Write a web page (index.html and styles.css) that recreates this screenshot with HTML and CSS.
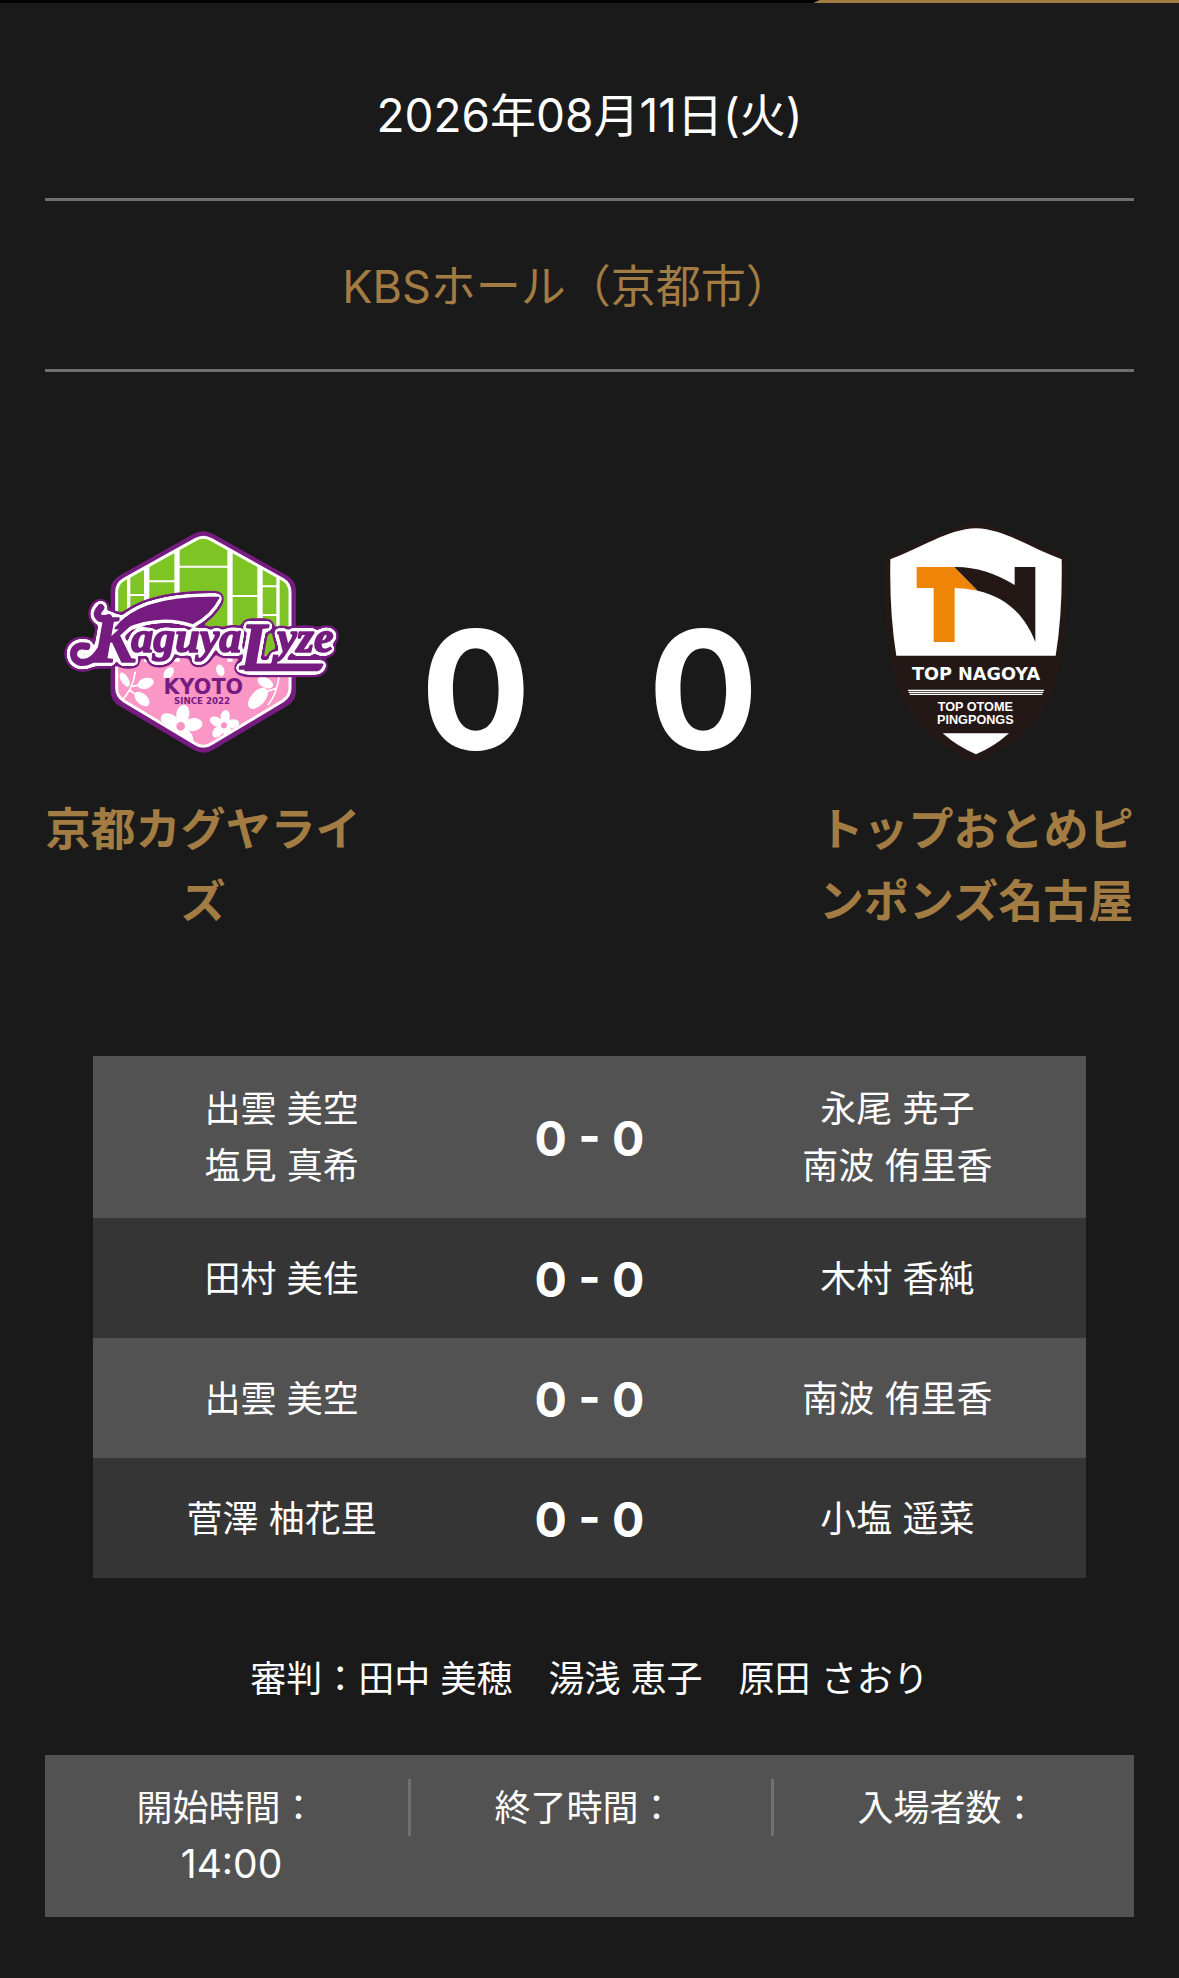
FILE: index.html
```html
<!DOCTYPE html>
<html lang="ja">
<head>
<meta charset="utf-8">
<meta name="viewport" content="width=device-width, initial-scale=1">
<title>京都カグヤライズ 対 トップおとめピンポンズ名古屋</title>
<link rel="stylesheet" href="styles.css">
</head>
<body>
<div class="tabs"><span class="tabs-active"></span></div>
<main class="match">
  <h1 class="date">2026年08月11日(火)</h1>
  <p class="venue"><a href="#venue">KBSホール（京都市）</a></p>

  <section class="versus">
    <a class="team" href="#kyoto">
      <svg class="team-logo" viewBox="-6 -15 930 780" role="img" aria-label="Kaguya Lyze">
        <defs>
          <clipPath id="hex"><path d="M436 74Q460 60 484 74L698 193Q720 206 720 232V520Q720 544 698 558L484 686Q460 702 436 686L222 558Q200 544 200 520V232Q200 206 222 193Z"/></clipPath>
          <filter id="rings" filterUnits="userSpaceOnUse" x="0" y="180" width="920" height="360" color-interpolation-filters="sRGB">
            <feGaussianBlur in="SourceAlpha" stdDeviation="11" result="soft"/>
            <feComponentTransfer in="soft" result="outer"><feFuncA type="linear" slope="40" intercept="-1.2"/></feComponentTransfer>
            <feFlood flood-color="#761c80"/><feComposite in2="outer" operator="in" result="edge"/>
            <feGaussianBlur in="SourceAlpha" stdDeviation="8" result="near"/>
            <feComponentTransfer in="near" result="inner"><feFuncA type="linear" slope="30" intercept="-2"/></feComponentTransfer>
            <feFlood flood-color="#fff"/><feComposite in2="inner" operator="in" result="halo"/>
            <feMerge><feMergeNode in="edge"/><feMergeNode in="halo"/><feMergeNode in="SourceGraphic"/></feMerge>
          </filter>
          <g id="flower"><ellipse cy="-34" rx="18" ry="27"/><ellipse cy="-34" rx="18" ry="27" transform="rotate(72)"/><ellipse cy="-34" rx="18" ry="27" transform="rotate(144)"/><ellipse cy="-34" rx="18" ry="27" transform="rotate(216)"/><ellipse cy="-34" rx="18" ry="27" transform="rotate(288)"/><circle r="12" fill="#f993c4"/></g>
        </defs>
        <path fill="#761c80" d="M430 57Q460 40 490 57L710 181Q738 197 738 226V530Q738 558 710 574L490 704Q460 722 430 704L210 574Q182 558 182 530V226Q182 197 210 181Z"/>
        <g clip-path="url(#hex)">
          <path fill="#7fc425" d="M190 50H730V440H190Z"/>
          <path fill="#fb97c6" d="M190 420H730V710H190Z"/>
          <path fill="none" stroke="#fff" stroke-width="16" d="M381 50V440M540 50V440M290 100V440M630 100V440"/>
          <path fill="none" stroke="#fff" stroke-width="10" d="M236 150V440M684 150V440"/>
          <path fill="none" stroke="#fff" stroke-width="6" d="M381 155H540M290 199H381M540 243H630M236 240H290M630 214H684M630 300H684"/>
          <g fill="#fff">
            <use href="#flower" transform="translate(392 634) rotate(10) scale(1.08)"/>
            <use href="#flower" transform="translate(522 631) rotate(8) scale(.76)"/>
            <ellipse cx="356" cy="474" rx="13" ry="20" transform="rotate(35 356 474)"/>
            <ellipse cx="511" cy="466" rx="12" ry="18" transform="rotate(-20 511 466)"/>
            <ellipse cx="287" cy="505" rx="25" ry="16" transform="rotate(-18 287 505)"/>
            <ellipse cx="276" cy="552" rx="27" ry="16" transform="rotate(42 276 552)"/>
            <ellipse cx="624" cy="550" rx="38" ry="21" transform="rotate(-48 624 550)"/>
            <ellipse cx="646" cy="503" rx="25" ry="15" transform="rotate(28 646 503)"/>
            <ellipse cx="224" cy="494" rx="24" ry="11" transform="rotate(60 224 494)"/>
            <path fill="none" stroke="#fff" stroke-width="5" d="M208 562Q248 530 256 470M246 514L280 508M238 526L270 545M654 570Q680 540 688 480M640 532L680 520"/>
          </g>
        </g>
        <path fill="none" stroke="#fff" stroke-width="9" d="M436 74Q460 60 484 74L698 193Q720 206 720 232V520Q720 544 698 558L484 686Q460 702 436 686L222 558Q200 544 200 520V232Q200 206 222 193Z"/>
        <g class="wordmark" filter="url(#rings)">
          <path d="M196 340C240 282 330 243 506 248Q480 298 428 325Q330 290 212 342Z"/>
          <path d="M600 448H818Q812 464 802 466H585Z"/>
          <path class="wordmark-tail" d="M110 394C66 384 60 428 86 440C124 452 152 410 166 376"/>
          <path class="wordmark-tail" d="M152 278C132 300 146 318 176 308"/>
          <text><tspan class="script-cap" x="124" y="440">K</tspan><tspan class="script" x="244" y="410">aguya</tspan><tspan class="script-cap" x="570" y="462">L</tspan><tspan class="script" x="682" y="410">yze</tspan></text>
        </g>
        <text class="logo-city" x="460" y="538">KYOTO</text>
        <text class="logo-since" x="456" y="567">SINCE 2022</text>
      </svg>
      <span class="team-name">京都カグヤライズ</span>
    </a>

    <div class="score"><span>0</span><span>0</span></div>

    <a class="team" href="#nagoya">
      <svg class="team-logo" viewBox="0 0 690 780" role="img" aria-label="Top Nagoya">
        <path fill="#231815" d="M345 38C430 48 520 108 620 137C626 300 610 420 586 510C550 630 450 715 345 760C240 715 140 630 104 510C80 420 64 300 70 137C170 108 260 48 345 38Z"/>
        <path fill="#fff" d="M345 55C430 57 510 115 602 148Q605 310 584 437H106Q85 310 88 148C180 115 260 57 345 55ZM245 670H444Q400 710 345 733Q290 710 245 670Z"/>
        <path fill="#ef8508" d="M167 171H280L350 242Q315 234 281 234V396H218V234H167Z"/>
        <path fill="#231815" d="M280 171Q370 169 461 225V171H523V396C490 310 430 260 350 242Z"/>
        <text class="crest-title" x="345" y="510">TOP NAGOYA</text>
        <path stroke="#fff" stroke-width="4" d="M141 541H549M143 547H547M146 553H544"/>
        <text class="crest-sub" x="343" y="602">TOP OTOME</text>
        <text class="crest-sub" x="343" y="642">PINGPONGS</text>
      </svg>
      <span class="team-name">トップおとめピンポンズ名古屋</span>
    </a>
  </section>

  <table class="games">
    <tbody>
      <tr><td>出雲 美空<br>塩見 真希</td><td class="games-score">0 - 0</td><td>永尾 尭子<br>南波 侑里香</td></tr>
      <tr><td>田村 美佳</td><td class="games-score">0 - 0</td><td>木村 香純</td></tr>
      <tr><td>出雲 美空</td><td class="games-score">0 - 0</td><td>南波 侑里香</td></tr>
      <tr><td>菅澤 柚花里</td><td class="games-score">0 - 0</td><td>小塩 遥菜</td></tr>
    </tbody>
  </table>

  <p class="referees">審判：田中 美穂　湯浅 恵子　原田 さおり</p>

  <ul class="facts">
    <li>開始時間：<br>&nbsp;<time>14:00</time></li>
    <li>終了時間：&nbsp;</li>
    <li>入場者数：&nbsp;</li>
  </ul>
</main>
</body>
</html>
```
FILE: styles.css
```css
* {
  box-sizing: border-box;
}

body {
  margin: 0;
  background: #1a1a1a;
  color: #fff;
  font-family: Inter, "Noto Sans CJK JP", sans-serif;
  font-size: 36px;
  line-height: 57px;
}

a {
  color: #a27c42;
  text-decoration: none;
}

.tabs {
  display: flex;
  justify-content: flex-end;
  height: 3px;
  background: #000;
}

.tabs-active {
  width: 31%;
  background: #a27c42;
  clip-path: polygon(6px 0, 100% 0, 100% 100%, 0 100%);
}

.match {
  padding: 0 45px 61px;
}

.date,
.venue {
  margin: 0;
  border-bottom: 3px solid #707070;
  font-size: 45px;
  font-weight: 400;
  line-height: 72px;
  text-align: center;
}

.date {
  padding: 76px 0 47px;
  font-size: 46px;
}

.venue {
  padding: 50px 46px 46px 0;
}

.versus {
  display: grid;
  grid-template-columns: 29% 1fr 29%;
  margin-top: 138px;
}

.team {
  display: flex;
  flex-direction: column;
  align-items: center;
  gap: 24px;
}

.team-logo {
  height: 260px;
  max-width: 100%;
}

.team-name {
  font-size: 45px;
  font-weight: 700;
  line-height: 72px;
  text-align: center;
}

.score {
  display: flex;
  justify-content: center;
  gap: 117px;
  padding-top: 90px;
  font-size: 164px;
  font-weight: 700;
  line-height: 180px;
}

.games {
  width: calc(100% - 96px);
  margin: 118px auto 0;
  border-collapse: collapse;
  table-layout: fixed;
  text-align: center;
}

.games tr {
  background: #353535;
}

.games tr:nth-child(odd) {
  background: #525252;
}

.games td {
  width: 38%;
  padding: 25px 0 23px;
}

.games .games-score {
  width: 24%;
  padding: 26px 0 22px;
  font-size: 48px;
  font-weight: 700;
  line-height: 72px;
}

.referees {
  margin: 73px 0 47px;
  text-align: center;
}

.facts {
  display: flex;
  align-items: flex-start;
  margin: 0;
  padding: 24px 0 23px;
  background: #525252;
  list-style: none;
  text-align: center;
}

.facts li {
  width: 33%;
  flex-grow: 1;
  padding-top: 1px;
}

.facts time {
  font-size: 39px;
  line-height: 1;
}

.facts li + li {
  position: relative;
}

.facts li + li::before {
  position: absolute;
  top: 0;
  left: 0;
  width: 3px;
  height: 57px;
  background: #707070;
  content: "";
}

.wordmark {
  fill: #761c80;
  stroke: #761c80;
  stroke-width: 5px;
  stroke-linejoin: round;
}

.wordmark-tail {
  fill: none;
  stroke-width: 22px;
  stroke-linecap: round;
}

.script {
  font: italic 700 132px "Liberation Serif", serif;
}

.script-cap {
  font: italic 700 200px "Liberation Serif", serif;
}

.logo-city,
.logo-since,
.crest-title {
  fill: #761c80;
  font: 700 62px "DejaVu Sans", sans-serif;
  text-anchor: middle;
}

.logo-since {
  font-size: 26px;
}

.crest-title {
  fill: #fff;
  font-size: 53px;
}

.crest-sub {
  fill: #fff;
  font: 700 38px "Liberation Sans", sans-serif;
  text-anchor: middle;
}
```
